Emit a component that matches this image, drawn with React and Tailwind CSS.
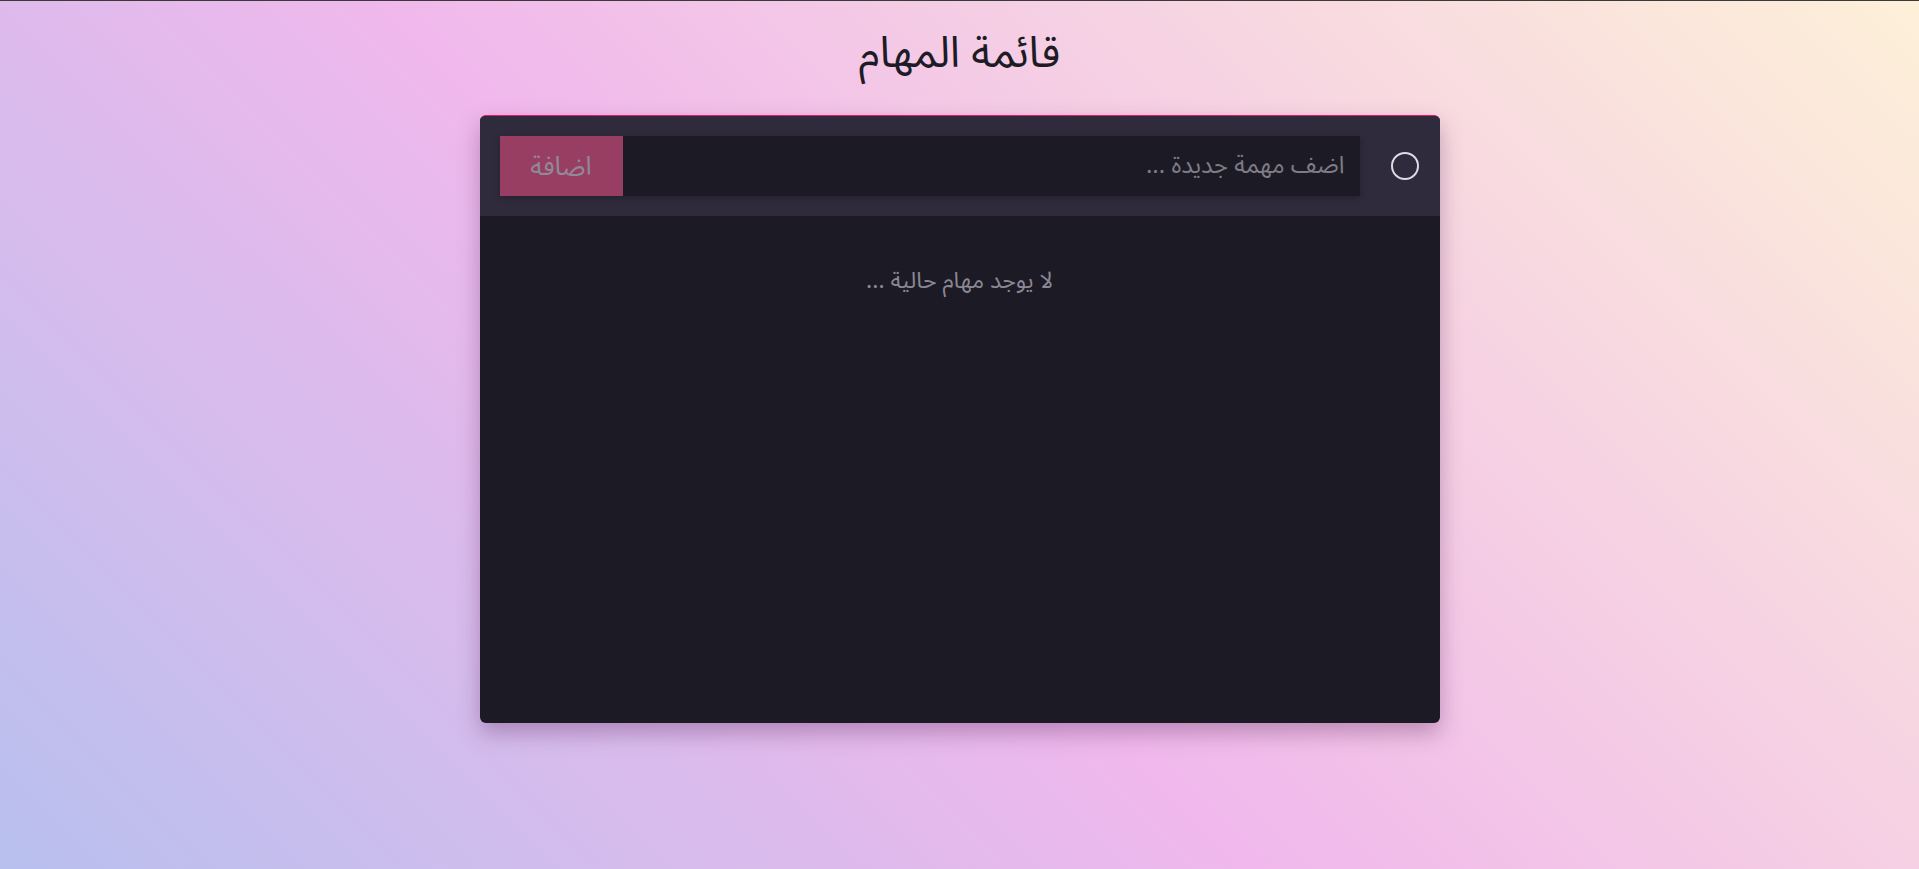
import React, { useState } from 'react';

const font = { fontFamily: '"Noto Sans Arabic", "DejaVu Sans", sans-serif' };

const App = () => {
    const [task, setTask] = useState('');
    const [tasks, setTasks] = useState([]);

    const addTask = () => {
        if (!task.trim()) return;
        setTasks([...tasks, { id: Date.now(), text: task, done: false }]);
        setTask('');
    };

    return (
        <div
            dir="rtl"
            style={font}
            className="h-[869px] overflow-hidden w-full border-t border-[#3a3a3a] bg-[linear-gradient(45deg,#b8c0ee_0%,#f0b8ec_45%,#fdf0d8_100%)] flex flex-col items-center"
        >
            {/* Title */}
            <h1 className="mt-[26px] h-[54px] text-[43px] leading-[54px] text-[#1c1b26]">قائمة المهام</h1>

            {/* Card */}
            <div className="mt-[34px] w-[960px] h-[608px] shrink-0 rounded-md overflow-hidden border-t border-[#e8196a] bg-[#1c1b25] shadow-[0_10px_22px_rgba(90,40,90,0.35)] flex flex-col">
                <div className="h-[100px] bg-[#2f2b3c] flex items-center pr-[21px] pl-5 gap-[31px]">
                    <span className="w-7 h-7 rounded-full border-2 border-[#dcdce4] shrink-0" />
                    <div className="flex-1 flex h-[60px] shadow-[0_2px_6px_rgba(0,0,0,0.25)]">
                        <input
                            value={task}
                            onChange={(e) => setTask(e.target.value)}
                            onKeyDown={(e) => e.key === 'Enter' && addTask()}
                            placeholder="اضف مهمة جديدة ..."
                            style={font}
                            className="flex-1 bg-[#1c1b25] pr-[15px] text-[24px] text-[#d6d4dc] placeholder:text-[#7f7c88] outline-none"
                        />
                        <button
                            onClick={addTask}
                            style={font}
                            className="w-[123px] bg-[#993e63] text-[26px] text-[#8f8a98]"
                        >
                            اضافة
                        </button>
                    </div>
                </div>

                <div className="flex-1 pt-[48px]">
                    {tasks.length === 0 ? (
                        <p className="text-center text-[23px] leading-[34px] text-[#8a8794]">لا يوجد مهام حالية ...</p>
                    ) : (
                        tasks.map((t) => (
                            <div key={t.id} className="px-6 py-3 text-[20px] text-[#d6d4dc]">{t.text}</div>
                        ))
                    )}
                </div>
            </div>
        </div>
    );
};

export default App;
